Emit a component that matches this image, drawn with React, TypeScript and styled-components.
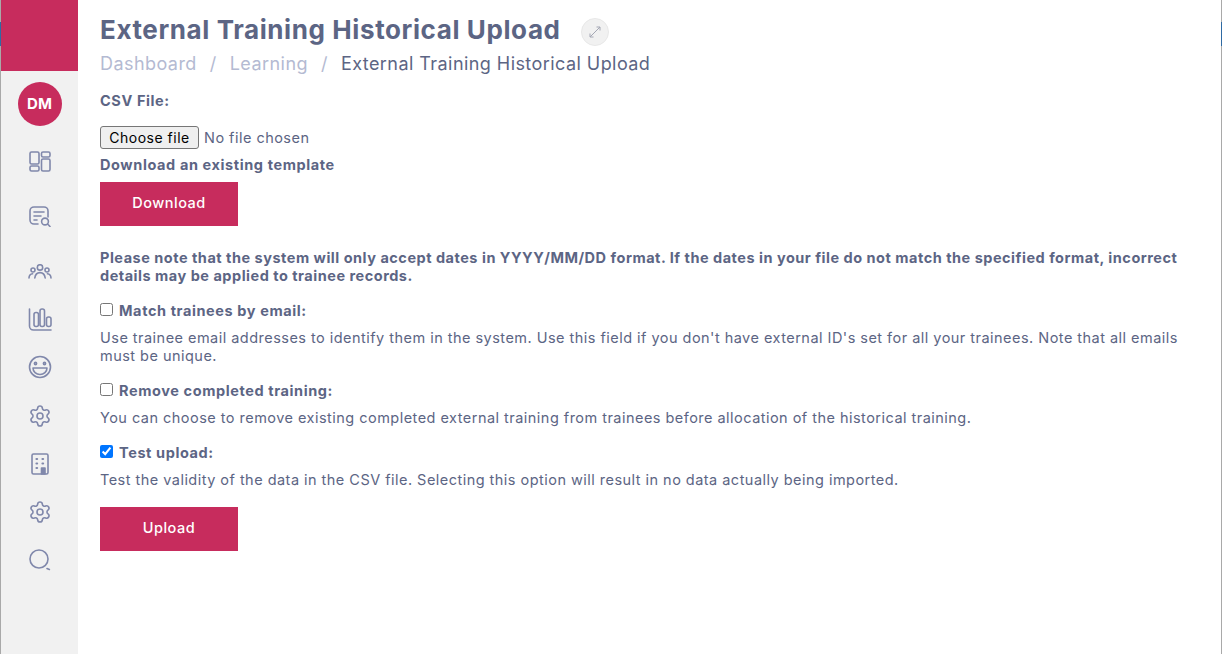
import styled, { createGlobalStyle } from 'styled-components';
import { Settings } from 'lucide-react';

const CRIMSON = '#c72c5d';
const SLATE = '#5c6584';
const ICON = '#8088ab';

const GlobalStyle = createGlobalStyle`
    html, body {
        margin: 0;
        padding: 0;
        height: 100%;
        background: #fff;
    }
    #root {
        height: 100%;
    }
`;

const Page = styled.div`
    display: flex;
    height: 654px;
    width: 1222px;
    overflow: hidden;
    font-family: Inter, 'Noto Sans', sans-serif;
    color: ${SLATE};
    font-size: 14.5px;
    letter-spacing: 0.47px;
`;

const WindowEdge = styled.div`
    flex: 0 0 1px;
    background: linear-gradient(
        to bottom,
        #a9a9a9 0,
        #a9a9a9 22px,
        #2f6aa3 22px,
        #2f6aa3 46px,
        #a9a9a9 46px
    );
`;

const Sidebar = styled.nav`
    flex: 0 0 77px;
    display: flex;
    flex-direction: column;
    align-items: center;
    background: #f1f1f1;
`;

const SidebarHeader = styled.div`
    align-self: stretch;
    height: 71px;
    background: ${CRIMSON};
`;

const Avatar = styled.div`
    width: 44px;
    height: 44px;
    box-sizing: border-box;
    margin-top: 11px;
    margin-bottom: 11px;
    padding-bottom: 2px;
    border-radius: 50%;
    background: ${CRIMSON};
    color: #fff;
    font-weight: 700;
    font-size: 15px;
    letter-spacing: 0;
    display: flex;
    align-items: center;
    justify-content: center;
`;

const NavIcon = styled.div<{ $height: number }>`
    height: ${(props) => props.$height}px;
    display: flex;
    align-items: center;
    justify-content: center;
    svg {
        display: block;
        fill: none;
        stroke: ${ICON};
        stroke-width: 1.6;
        stroke-linecap: round;
        stroke-linejoin: round;
    }
`;

const Main = styled.main`
    flex: 1;
    padding: 13px 22px 0;
    min-width: 0;
`;

const TitleRow = styled.div`
    display: flex;
    align-items: center;
    height: 34px;
`;

const Title = styled.h1`
    margin: 0;
    font-size: 26px;
    line-height: 34px;
    font-weight: 700;
    color: ${SLATE};
    letter-spacing: 0.6px;
    white-space: nowrap;
`;

const ExpandButton = styled.div`
    width: 28px;
    height: 28px;
    margin-left: 20px;
    margin-top: 4px;
    border-radius: 50%;
    background: #f1f1f1;
    border: 1px solid #e8e8e8;
    box-sizing: border-box;
    display: flex;
    align-items: center;
    justify-content: center;
`;

const Breadcrumbs = styled.div`
    display: flex;
    align-items: center;
    height: 24px;
    margin-top: 4px;
    font-size: 18px;
    letter-spacing: 0.44px;
    white-space: nowrap;
`;

const Crumb = styled.span<{ $active?: boolean }>`
    color: ${(props) => (props.$active ? SLATE : '#b4bad2')};
`;

const CrumbDivider = styled.span`
    color: #b4bad2;
    margin: 0 13px;
`;

const FieldLabel = styled.div`
    font-weight: 700;
    letter-spacing: 0.6px;
    line-height: 18px;
`;

const CsvLabel = styled(FieldLabel)`
    margin-top: 17px;
`;

const FileRow = styled.div`
    display: flex;
    align-items: center;
    margin-top: 16px;
    height: 22px;
`;

const FileButton = styled.button`
    width: 99px;
    height: 23px;
    box-sizing: border-box;
    padding: 0;
    background: #efefef;
    border: 1px solid #767676;
    border-radius: 3px;
    font-family: Inter, sans-serif;
    font-size: 14px;
    letter-spacing: 0.5px;
    color: #000;
`;

const FileStatus = styled.span`
    margin-left: 5px;
`;

const TemplateLabel = styled(FieldLabel)`
    margin-top: 8px;
`;

const ActionButton = styled.button`
    display: block;
    width: 138px;
    height: 44px;
    padding: 0 0 3px;
    border: none;
    background: ${CRIMSON};
    color: #fff;
    font-family: Inter, sans-serif;
    font-size: 14.5px;
    letter-spacing: 0.5px;
    font-weight: 500;
`;

const DownloadButton = styled(ActionButton)`
    margin-top: 8px;
`;

const Notice = styled.p`
    margin: 23px 0 0;
    font-weight: 700;
    letter-spacing: 0.51px;
    line-height: 18px;
`;

const OptionRow = styled.label`
    display: flex;
    align-items: center;
    margin-top: 17px;
    font-weight: 700;
    letter-spacing: 0.6px;
    height: 18px;
    line-height: 18px;
`;

const Check = styled.input`
    flex: none;
    width: 13px;
    height: 13px;
    margin: 0 6px 3px 0;
    accent-color: #0075ff;
`;

const OptionText = styled.p`
    margin: 9px 0 0;
    line-height: 18px;
`;

const UploadButton = styled(ActionButton)`
    margin-top: 18px;
`;

const DashboardIcon = () => (
    <svg width="22" height="21" viewBox="0 0 22 21">
        <rect x="1" y="1" width="9" height="12" rx="1.5" />
        <rect x="1" y="15" width="9" height="5" rx="1.5" />
        <rect x="12.5" y="1" width="8.5" height="5" rx="1.5" />
        <rect x="12.5" y="8" width="8.5" height="12" rx="1.5" />
    </svg>
);

const SearchDocIcon = () => (
    <svg width="22" height="21" viewBox="0 0 22 21">
        <path d="M9 18H5a4 4 0 0 1-4-4V5a4 4 0 0 1 4-4h10a4 4 0 0 1 4 4v6" />
        <path d="M5 6h10M5 10h7M5 14h3" />
        <circle cx="16" cy="15.5" r="3.4" />
        <path d="M18.6 18L21 20.5" />
    </svg>
);

const PeopleIcon = () => (
    <svg width="24" height="15" viewBox="0 0 24 15">
        <circle cx="12" cy="3.4" r="2.7" />
        <circle cx="5" cy="6" r="2" />
        <circle cx="19" cy="6" r="2" />
        <path d="M6.8 14c.4-3.4 2.4-5.4 5.2-5.4s4.8 2 5.2 5.4" />
        <path d="M1 14c.1-2.4 1.6-4 3.6-4.2" />
        <path d="M23 14c-.1-2.4-1.6-4-3.6-4.2" />
    </svg>
);

const ChartIcon = () => (
    <svg width="24" height="23" viewBox="0 0 24 23">
        <path d="M1.5 1v17a4 4 0 0 0 4 4H23" />
        <rect x="6" y="4.5" width="4.5" height="14" rx="2" />
        <rect x="12" y="1" width="4.5" height="17.5" rx="2" />
        <rect x="18.5" y="9" width="4.5" height="9.5" rx="2" />
    </svg>
);

const SmileIcon = () => (
    <svg width="24" height="24" viewBox="0 0 24 24">
        <circle cx="12" cy="12" r="10.5" />
        <circle cx="7.5" cy="8.5" r="1.1" />
        <circle cx="16.5" cy="8.5" r="1.1" />
        <path d="M5 13h14a7 6.5 0 0 1-14 0z" />
    </svg>
);

const BuildingIcon = () => (
    <svg width="18" height="22" viewBox="0 0 18 22">
        <rect x="1" y="1" width="16" height="20" rx="1.5" />
        <path d="M5.5 6h.6M11.5 6h.6M5.5 10.5h.6M11.5 10.5h.6M5.5 15h.6" strokeWidth="2.2" />
        <path d="M10.5 21v-6h3.5v6z" fill={ICON} />
    </svg>
);

const SearchIcon = () => (
    <svg width="22" height="22" viewBox="0 0 22 22">
        <circle cx="10" cy="10" r="9" />
        <path d="M18 19.5l2.4 1" />
    </svg>
);

const ExpandIcon = () => (
    <svg width="12" height="12" viewBox="0 0 12 12" fill="none" stroke="#a4a7b4" strokeWidth="1">
        <path d="M1 11L11 1M7.5 1H11v3.5M1 7.5V11h3.5" />
    </svg>
);

const navItems = [
    { height: 48, icon: <DashboardIcon /> },
    { height: 62, icon: <SearchDocIcon /> },
    { height: 48, icon: <PeopleIcon /> },
    { height: 48, icon: <ChartIcon /> },
    { height: 48, icon: <SmileIcon /> },
    { height: 50, icon: <Settings size={24} strokeWidth={1.5} /> },
    { height: 46, icon: <BuildingIcon /> },
    { height: 50, icon: <Settings size={24} strokeWidth={1.5} /> },
    { height: 46, icon: <SearchIcon /> },
];

export default function App() {
    return (
        <Page>
            <GlobalStyle />
            <WindowEdge />
            <Sidebar>
                <SidebarHeader />
                <Avatar>DM</Avatar>
                {navItems.map((item, idx) => (
                    <NavIcon key={idx} $height={item.height}>
                        {item.icon}
                    </NavIcon>
                ))}
            </Sidebar>
            <Main>
                <TitleRow>
                    <Title>External Training Historical Upload</Title>
                    <ExpandButton>
                        <ExpandIcon />
                    </ExpandButton>
                </TitleRow>
                <Breadcrumbs>
                    <Crumb>Dashboard</Crumb>
                    <CrumbDivider>/</CrumbDivider>
                    <Crumb>Learning</Crumb>
                    <CrumbDivider>/</CrumbDivider>
                    <Crumb $active>External Training Historical Upload</Crumb>
                </Breadcrumbs>
                <CsvLabel>CSV File:</CsvLabel>
                <FileRow>
                    <FileButton type="button">Choose file</FileButton>
                    <FileStatus>No file chosen</FileStatus>
                </FileRow>
                <TemplateLabel>Download an existing template</TemplateLabel>
                <DownloadButton type="button">Download</DownloadButton>
                <Notice>
                    Please note that the system will only accept dates in YYYY/MM/DD format. If the dates in your file do not match the
                    specified format, incorrect details may be applied to trainee records.
                </Notice>
                <OptionRow>
                    <Check type="checkbox" readOnly />
                    Match trainees by email:
                </OptionRow>
                <OptionText>
                    Use trainee email addresses to identify them in the system. Use this field if you don't have external ID's set for all
                    your trainees. Note that all emails must be unique.
                </OptionText>
                <OptionRow>
                    <Check type="checkbox" readOnly />
                    Remove completed training:
                </OptionRow>
                <OptionText>
                    You can choose to remove existing completed external training from trainees before allocation of the historical
                    training.
                </OptionText>
                <OptionRow>
                    <Check type="checkbox" defaultChecked />
                    Test upload:
                </OptionRow>
                <OptionText>
                    Test the validity of the data in the CSV file. Selecting this option will result in no data actually being imported.
                </OptionText>
                <UploadButton type="button">Upload</UploadButton>
            </Main>
            <WindowEdge />
        </Page>
    );
}
